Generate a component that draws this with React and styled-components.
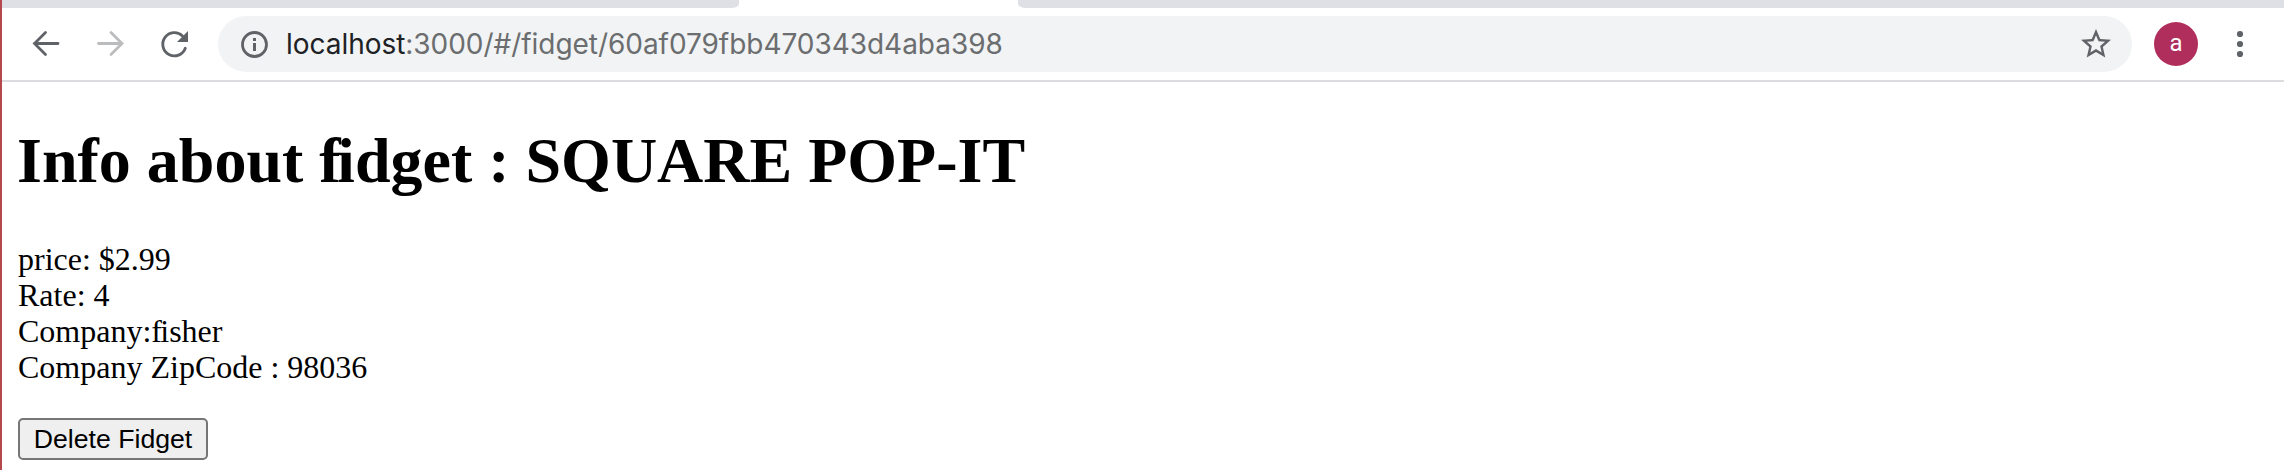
import React from "react";
import styled, { createGlobalStyle } from "styled-components";

const GlobalStyle = createGlobalStyle`
  * { box-sizing: border-box; }
  body { margin: 0; background: #fff; overflow: hidden; }
`;

const Window = styled.div`
  display: flex;
  flex-direction: column;
  height: 470px;
  border-left: 2px solid #b5484c;
  background: #fff;
`;

const TabStrip = styled.div`
  display: flex;
  justify-content: space-between;
  height: 8px;
`;

const TabEdge = styled.div`
  width: ${(p) => p.$width}px;
  background: #dee0e5;
  border-radius: ${(p) => (p.$side === "left" ? "0 0 16px 0" : "0 0 0 16px")} / 8px;
`;

const Toolbar = styled.header`
  display: flex;
  align-items: center;
  height: 74px;
  padding: 6px 24px 6px 24px;
  border-bottom: 2px solid #dadce0;
`;

const IconButton = styled.span`
  display: flex;
  flex: none;
  width: 40px;
  height: 40px;
  margin-right: ${(p) => p.$gap || 0}px;
  color: ${(p) => (p.$muted ? "#babcbe" : "#5f6368")};

  svg { width: 100%; height: 100%; }
`;

const AddressBar = styled.div`
  display: flex;
  flex: 1;
  align-items: center;
  height: 56px;
  margin-right: 22px;
  padding: 0 16px;
  border-radius: 28px;
  background: #f1f3f4;
`;

const Url = styled.span`
  flex: 1;
  margin-left: 12px;
  color: #6b6d6f;
  font: 28px/40px Inter, sans-serif;
  letter-spacing: -0.04px;
  white-space: nowrap;
`;

const Host = styled.span`
  color: #202124;
`;

const Avatar = styled.div`
  width: 44px;
  height: 44px;
  margin-right: 22px;
  border-radius: 50%;
  background: #b02e5b;
  color: #fff;
  font: 24px/42px Roboto, sans-serif;
  text-align: center;
`;

const Page = styled.main`
  padding: 42px 16px 0;
  color: #000;
  font: 32px/36px "Liberation Serif", serif;
`;

const Title = styled.h1`
  margin: 0 0 43px -1px;
  font-size: 64px;
  line-height: 74px;
`;

const Tight = styled.span`
  letter-spacing: -0.055em;
`;

const Detail = styled.div`
  height: 36px;
`;

const DeleteButton = styled.button`
  display: block;
  width: 190px;
  height: 42px;
  margin-top: 33px;
  padding: 0;
  border: 2px solid #767676;
  border-radius: 5px;
  background: #efefef;
  color: #000;
  font: 26.67px/38px "Liberation Sans", sans-serif;
  white-space: nowrap;
`;

const ArrowIcon = ({ forward }) => (
  <svg viewBox="0 0 40 40" fill="none" stroke="currentColor" strokeWidth="2.8" strokeLinecap="round" strokeLinejoin="miter">
    {forward ? <path d="M8.5 19.5H32M21 8.5L32 19.5L21 30.5" /> : <path d="M32 19.5H8.5M19.5 8.5L8.5 19.5L19.5 30.5" />}
  </svg>
);

const ReloadIcon = () => (
  <svg viewBox="0 0 40 40">
    <path d="M31.3 24.2A11.6 11.6 0 1 1 28.5 12" fill="none" stroke="currentColor" strokeWidth="2.8" strokeLinecap="round" />
    <path d="M34 7V18H23Z" fill="currentColor" />
  </svg>
);

const InfoIcon = () => (
  <svg viewBox="0 0 40 40">
    <circle cx="20.5" cy="20.5" r="12" fill="none" stroke="currentColor" strokeWidth="2.8" />
    <path d="M19 14H22V17H19ZM19 19H22V27H19Z" fill="currentColor" />
  </svg>
);

const StarIcon = () => (
  <svg viewBox="0 0 24 24">
    <path
      fill="currentColor"
      d="M22 9.24l-7.19-.62L12 2 9.19 8.63 2 9.24l5.46 4.73L5.82 21 12 17.27 18.18 21l-1.63-7.03L22 9.24zM12 15.4l-3.76 2.27 1-4.28-3.32-2.88 4.38-.38L12 6.1l1.71 4.04 4.38.38-3.32 2.88 1 4.28L12 15.4z"
    />
  </svg>
);

const MenuIcon = () => (
  <svg viewBox="0 0 40 40" fill="currentColor">
    <circle cx="20" cy="10" r="3.1" />
    <circle cx="20" cy="20" r="3.1" />
    <circle cx="20" cy="30" r="3.1" />
  </svg>
);

const StarButton = styled(IconButton)`
  width: 36px;
  height: 36px;
  margin-right: 2px;
`;

export default function App() {
  return (
    <>
      <GlobalStyle />
      <Window>
        <TabStrip>
          <TabEdge $side="left" $width={737} />
          <TabEdge $side="right" $width={1266} />
        </TabStrip>
        <Toolbar>
          <IconButton $gap={24}><ArrowIcon /></IconButton>
          <IconButton $gap={24} $muted><ArrowIcon forward /></IconButton>
          <IconButton $gap={24}><ReloadIcon /></IconButton>
          <AddressBar>
            <IconButton><InfoIcon /></IconButton>
            <Url><Host>localhost</Host>:3000/#/fidget/60af079fbb470343d4aba398</Url>
            <StarButton><StarIcon /></StarButton>
          </AddressBar>
          <Avatar>a</Avatar>
          <IconButton><MenuIcon /></IconButton>
        </Toolbar>
        <Page>
          <Title>Info about <Tight>f</Tight>idget : SQUARE POP-IT</Title>
          <Detail>price: $2.99</Detail>
          <Detail>Rate: 4</Detail>
          <Detail>Company:<Tight>f</Tight>isher</Detail>
          <Detail>Company ZipCode : 98036</Detail>
          <DeleteButton>Delete Fidget</DeleteButton>
        </Page>
      </Window>
    </>
  );
}
